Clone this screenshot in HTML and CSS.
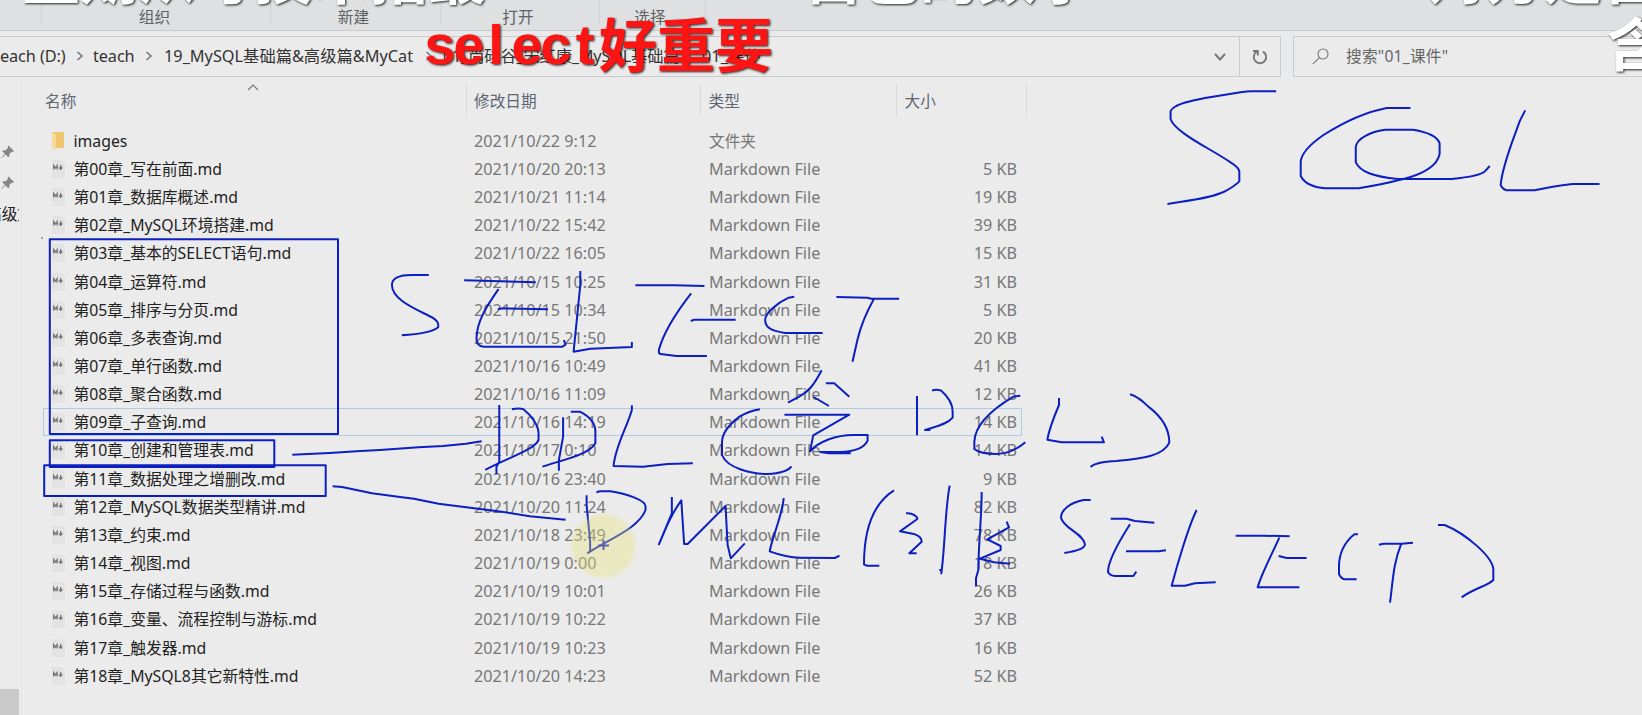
FILE: index.html
```html
<!DOCTYPE html>
<html lang="zh-CN">
<head>
<meta charset="utf-8">
<title>01_课件</title>
<link rel="stylesheet" href="styles.css">
</head>
<body>
<div class="window">
  <div class="ribbon">
    <span class="group g1">组织</span><span class="group g2">新建</span><span class="group g3">打开</span><span class="group g4">选择</span>
  </div>
  <div class="toolbar">
    <div class="address">
      <div class="crumbs">
        <span class="c1">each (D:)</span>
        <svg class="sep" viewBox="0 0 8 10"><path d="M1.5 1L6 5L1.5 9"/></svg>
        <span class="c2">teach</span>
        <svg class="sep" viewBox="0 0 8 10"><path d="M1.5 1L6 5L1.5 9"/></svg>
        <span class="c3">19_MySQL基础篇&amp;高级篇&amp;MyCat</span>
        <svg class="sep" viewBox="0 0 8 10"><path d="M1.5 1L6 5L1.5 9"/></svg>
        <span class="c4">01_尚硅谷_宋红康_MySQL基础篇</span>
        <svg class="sep" viewBox="0 0 8 10"><path d="M1.5 1L6 5L1.5 9"/></svg>
        <span class="c5">01_课件</span>
      </div>
      <svg class="drop" viewBox="0 0 12 8"><path d="M1 1L6 6.5L11 1"/></svg>
      <div class="refresh"><svg viewBox="0 0 16 16"><path d="M11 2.6A6.2 6.2 0 1 1 4.6 2.8M1 2H5.8V6.6"/></svg></div>
    </div>
    <div class="search">
      <svg viewBox="0 0 17 17"><circle cx="11" cy="6" r="5"/><path d="M7.4 9.6L.8 16.2"/></svg>
      <span>搜索"01_课件"</span>
    </div>
  </div>
  <div class="content">
    <div class="nav">
      <svg class="pin p1" viewBox="0 0 14 14"><path d="M8 0L14 6L12.5 7L11.5 6.6L9 9.2L9 11.6L7.8 12.6L4.9 9.6L.5 13.8L.2 13.5L4.2 8.9L1.4 6.1L2.4 5L5 5L7.6 2.5L7.1 1.3Z"/></svg>
      <svg class="pin p2" viewBox="0 0 14 14"><path d="M8 0L14 6L12.5 7L11.5 6.6L9 9.2L9 11.6L7.8 12.6L4.9 9.6L.5 13.8L.2 13.5L4.2 8.9L1.4 6.1L2.4 5L5 5L7.6 2.5L7.1 1.3Z"/></svg>
      <div class="navtext"><span>高级篇</span></div>
      <div class="thumb"></div>
    </div>
    <div class="files">
      <div class="head">
        <div class="h-name">名称<svg class="sort" viewBox="0 0 12 7"><path d="M1 6L6 1L11 6"/></svg></div>
        <div>修改日期</div><div>类型</div><div>大小</div>
      </div>
      <div class="list" id="list"></div>
    </div>
  </div>
</div>
<svg class="ink" width="1642" height="715" viewBox="0 0 1642 715">
  <g class="pen">
    <path d="M49.8 239.3H338V434H49.8ZM49.8 440.3H274.3V467H49.8ZM44.2 465.3H325.7V496H44.2Z"/>
    <g transform="translate(1092 0) scale(.35077 .33333)">
      <path d="M525 274H455C440 274 430 276 415 278L340 291C300 298 262 306 240 318Q224 328 224 335V357Q230 376 262 400C300 430 350 455 395 487Q420 503 420 516V544Q405 560 375 576C340 593 290 600 250 606L215 612"/>
      <path d="M908 324H840C780 336 720 365 660 405Q598 450 595 485V528Q610 560 665 565H760C800 558 840 550 872 541C920 530 960 512 980 487Q991 470 991 460V430C985 408 950 395 915 389H835C795 395 755 415 752 440V487C765 515 800 530 872 537H1025C1070 532 1110 525 1120 514L1134 498"/>
      <path d="M1235 331L1220 362C1200 420 1170 495 1165 555Q1170 568 1182 571H1262C1300 562 1330 557 1370 552H1447"/>
    </g>
    <g transform="translate(380 250) scale(.35077 .33333)">
      <path d="M139 75H90C55 75 34 84 34 105C34 150 105 178 150 203Q166 214 166 224V232C150 246 110 253 62 256"/>
      <path d="M240 91L444 97M338 117C310 160 276 210 275 265Q275 290 296 290H520L529 284L524 270M336 178L350 175L479 178"/>
      <path d="M571 63V105L552 305L600 296L718 291V276"/>
      <path d="M728 106H840L925 108M887 130C850 180 810 240 795 300Q794 312 800 312L845 318H932M886 213L896 209H1014"/>
      <path d="M1181 140L1165 143C1130 160 1098 190 1098 210C1098 235 1120 243 1155 249H1262"/>
      <path d="M1301 141L1390 143L1400 146H1480M1408 147C1385 190 1370 230 1361 270L1347 335"/>
      <path d="M-250 614L-144 609L-55 603L0 600L110 592L180 588L245 581L290 574"/>
      <path d="M340 465V635L332 650V673M376 478Q392 474 408 477C430 495 452 525 452 550V570C440 600 360 625 300 660"/>
      <path d="M522 502V560L510 630V662M544 485H570C598 500 614 520 614 545V580C595 615 520 630 463 650"/>
      <path d="M718 466V480C705 530 670 590 666 648L750 650L820 642L892 640"/>
      <path d="M1083 478Q1055 482 1025 500C1000 520 976 545 975 575V615C990 655 1060 672 1105 672C1140 670 1165 660 1173 649"/>
      <path d="M1259 361C1235 410 1220 425 1195 440L1163 458M1271 400H1295L1338 440M1236 441L1280 468M1153 494H1338L1235 556L1226 604C1250 575 1300 555 1350 555H1390V572C1380 592 1360 604 1310 606H1255L1280 610H1342"/>
    </g>
    <g transform="translate(780 370) scale(.33333)">
      <path d="M411 78V196M456 62Q468 57 484 62C510 85 518 105 518 125V143C500 164 465 170 435 180H451"/>
      <path d="M721 77L700 80C650 110 585 160 583 215V237Q600 252 650 252C690 250 715 235 736 217"/>
      <path d="M837 84V105C820 145 808 175 802 209L845 217H972L965 200"/>
      <path d="M1050 73C1075 80 1090 95 1105 110C1145 140 1168 175 1168 218C1150 260 1080 266 1010 273Q945 276 932 291"/>
      <path d="M342 361C280 400 252 480 252 583L260 587H298M378 430C400 428 412 440 412 447L360 484L405 493Q425 500 425 515L388 550H410M509 347C495 420 495 530 484 610V600H478"/>
      <path d="M605 366C605 440 595 530 595 600L588 625V648M680 455L687 472L622 508L662 528V540L600 566L642 577L690 581"/>
      <path d="M932 390H910C870 398 843 420 843 443C850 475 910 490 915 523Q915 540 853 549"/>
      <path d="M992 446H1040L1065 453L1123 458M1050 463C1020 510 984 570 984 606Q990 617 1005 618H1060L1069 605M1038 544H1135L1158 541"/>
      <path d="M1250 420C1225 470 1190 590 1175 647H1215L1245 640L1307 637"/>
    </g>
    <g transform="translate(1040 380) scale(.33333)">
      <path d="M587 467H670L749 469M718 473C690 535 665 580 653 622H778M716 528L740 534H800"/>
      <path d="M954 463H943C910 490 897 525 897 560V583Q905 598 915 598H950"/>
      <path d="M1017 494L1030 491H1085L1119 488M1083 493C1060 550 1059 600 1050 668"/>
      <path d="M1194 435H1214C1275 460 1360 530 1360 570V600C1340 620 1310 620 1265 652"/>
    </g>
    <g transform="translate(400 475) scale(.35077 .33333)">
      <path d="M-192 34L-165 36L-80 55L0 66L40 71L110 86L200 98L290 110L370 124L472 134"/>
      <path d="M532 61V90L542 200V232M560 52L570 49H600C650 58 700 75 700 95V105C680 160 600 190 534 235"/>
      <path d="M775 66V115L738 208C755 170 765 130 802 76L810 207H820L928 93L934 210L943 250L983 205"/>
      <path d="M1094 69C1090 120 1060 190 1054 229C1075 237 1100 247 1140 248L1240 249L1253 242"/>
    </g>
    <path d="M598 545.5H609M603.5 540V550"/>
  </g>
  <circle class="halo" cx="603.5" cy="546" r="32"/>
  <circle class="speck" cx="42" cy="238" r=".8"/>
  <g class="danmaku">
    <text x="22" y="-1">量期从写技术招最</text>
    <text x="804" y="-1">自己的数字</text>
    <text x="1428" y="-1">对方是否</text>
    <text x="1607" y="66">含</text>
    <text class="red latin" x="440 469 496 527 556 585" y="63.5" text-anchor="middle">select</text>
    <text class="red" x="599" y="67">好重要</text>
  </g>
</svg>
<script src="files.js"></script>
</body>
</html>
```

FILE: styles.css
```css
* { box-sizing: border-box; }
body { margin: 0; width: 1642px; height: 715px; overflow: hidden; background: #ebebeb; color: #222;
  font: 15.7px/20px "Noto Sans", "Noto Sans CJK SC", sans-serif; white-space: nowrap; }
svg { fill: none; stroke: #777; display: block; flex: none; }
.window { width: 1642px; height: 715px; display: flex; flex-direction: column; }
.ribbon { height: 31px; background: #dfe0e2; border-bottom: 1px solid #c8cacc; display: flex; color: #606264; padding-left: 41px; }
.group { border-left: 1px solid #d2d4d6; height: 26px; padding-top: 7px; text-align: center; }
.g1 { width: 229px; padding-right: 3px; }
.g2 { width: 170px; padding-right: 4px; }
.g3 { width: 159px; padding-right: 4px; }
.g4 { width: 107px; padding-right: 5px; border-right: 1px solid #d2d4d6; }
.toolbar { height: 46px; padding-top: 5px; display: flex; gap: 12px; background: #e9eaeb; }
.address { width: 1281px; border: 1px solid #c8cacc; border-left: 0; display: flex; align-items: center; background: #ebebeb; }
.crumbs { display: flex; align-items: center; flex: 1; font-size: 16.3px; color: #333; padding-bottom: 1px; }
.sep { width: 8px; height: 10px; stroke-width: 1.6; }
.c1 { width: 76px; letter-spacing: -.1px; }
.c1 + .sep, .c2 + .sep { margin-right: 9px; }
.c2 { width: 52px; letter-spacing: -.1px; }
.c3 { width: 261px; margin-left: 2px; }
.c4 { width: 238px; margin-left: 10px; letter-spacing: -.2px; }
.c5 { margin-left: 13px; }
.drop { width: 12px; height: 8px; stroke-width: 2; margin-right: 13px; }
.refresh { width: 41px; height: 100%; border-left: 1px solid #c8cacc; display: flex; align-items: center; justify-content: center; }
.refresh svg { width: 16px; height: 16px; stroke-width: 1.9; }
.search { flex: 1; border: 1px solid #c8cacc; border-right: 0; display: flex; align-items: center; color: #666; padding: 0 0 1px 18px; gap: 17px; background: #ebebeb; letter-spacing: .2px; }
.search svg { width: 17px; height: 17px; stroke-width: 1.1; }
.content { flex: 1; display: flex; }
.nav { width: 22px; height: 638px; border-right: 1px solid #e4e4e4; display: flex; flex-direction: column; padding-top: 68px; overflow: hidden; }
.pin { width: 13px; height: 14px; margin-left: 1px; fill: #858688; stroke: none; }
.p2 { margin-top: 17px; }
.navtext { width: 19px; overflow: hidden; display: flex; margin-top: 14px; }
.navtext span { margin-left: -14px; }
.thumb { width: 19px; height: 26px; margin-top: auto; background: #c9c9c9; }
.files { flex: 1; }
.head { height: 40px; margin-top: 7px; display: grid; grid-template-columns: 444.5px 234.5px 196px 130px; color: #5f6673; }
.head > div { height: 33px; border-right: 1px solid #d9dadc; padding: 7px 0 0 7.5px; }
.head .h-name { padding-left: 23px; display: flex; }
.sort { width: 12px; height: 7px; margin: -7px 0 0 171px; stroke-width: 1.2; }
.list { margin: 2.7px 0 0 21px; width: 979px; }
.row { height: 28.16px; display: grid; grid-template-columns: 430px 235px 308px; align-items: center; border: 1px solid transparent; color: #777; font-size: 16.2px; }
.row.sel { border-color: #aecbe3; }
.name { display: flex; align-items: center; padding-left: 7px; gap: 8.5px; color: #222; font-size: 15.8px; }
.icon { width: 14px; height: 18px; stroke: none; }
.zh { font-size: 15.7px; }
.type-size { display: flex; justify-content: space-between; }
.ink { position: absolute; left: 0; top: 0; stroke: none; }
.halo { fill: #e8e37a; opacity: .36; filter: blur(1.5px); }
.speck { fill: #444; }
.pen { stroke: #0c1fc0; stroke-width: 2; stroke-linejoin: round; }
.pen path { vector-effect: non-scaling-stroke; }
.danmaku { font: bold 58px "Noto Sans CJK SC", sans-serif; fill: #fff; filter: drop-shadow(1px 1.5px 1px rgba(0,0,0,.85)); }
.red { fill: #ff1414; }
.latin { font: bold 56px "Liberation Sans", sans-serif; }
```

FILE: files.js
```js
const files = [
  ['images', '2021/10/22 9:12', ''],
  ['第00章_写在前面.md', '2021/10/20 20:13', '5 KB'],
  ['第01章_数据库概述.md', '2021/10/21 11:14', '19 KB'],
  ['第02章_MySQL环境搭建.md', '2021/10/22 15:42', '39 KB'],
  ['第03章_基本的SELECT语句.md', '2021/10/22 16:05', '15 KB'],
  ['第04章_运算符.md', '2021/10/15 10:25', '31 KB'],
  ['第05章_排序与分页.md', '2021/10/15 10:34', '5 KB'],
  ['第06章_多表查询.md', '2021/10/15 21:50', '20 KB'],
  ['第07章_单行函数.md', '2021/10/16 10:49', '41 KB'],
  ['第08章_聚合函数.md', '2021/10/16 11:09', '12 KB'],
  ['第09章_子查询.md', '2021/10/16 14:19', '14 KB'],
  ['第10章_创建和管理表.md', '2021/10/17 0:10', '14 KB'],
  ['第11章_数据处理之增删改.md', '2021/10/16 23:40', '9 KB'],
  ['第12章_MySQL数据类型精讲.md', '2021/10/20 11:24', '82 KB'],
  ['第13章_约束.md', '2021/10/18 23:49', '78 KB'],
  ['第14章_视图.md', '2021/10/19 0:00', '18 KB'],
  ['第15章_存储过程与函数.md', '2021/10/19 10:01', '26 KB'],
  ['第16章_变量、流程控制与游标.md', '2021/10/19 10:22', '37 KB'],
  ['第17章_触发器.md', '2021/10/19 10:23', '16 KB'],
  ['第18章_MySQL8其它新特性.md', '2021/10/20 14:23', '52 KB']
];
const folder = '<svg class="icon" viewBox="0 0 14 18"><path d="M1 0H13V16H1Z" fill="#edc66f"/><path d="M1 0L5 3V18L1 16Z" fill="#f6dc98"/></svg>';
const md = '<svg class="icon" viewBox="0 0 14 18"><path d="M1 0H11L14 3V18H1Z" fill="#e3e3e3"/><path d="M2.7 9.5V5.5L4.4 8L6.1 5.5V9.5M9.7 5V9M8 7.4L9.7 9.2L11.4 7.4" stroke="#707274" stroke-width="1.3" fill="none"/></svg>';
document.getElementById('list').innerHTML = files.map(([name, date, size], i) =>
  `<div class="row${i === 10 ? ' sel' : ''}"><div class="name">${i ? md : folder}<span>${name}</span></div><div>${date}</div>` +
  (i ? `<div class="type-size"><span>Markdown File</span><span>${size}</span></div>` : '<div class="zh">文件夹</div>') + '</div>').join('');
```
